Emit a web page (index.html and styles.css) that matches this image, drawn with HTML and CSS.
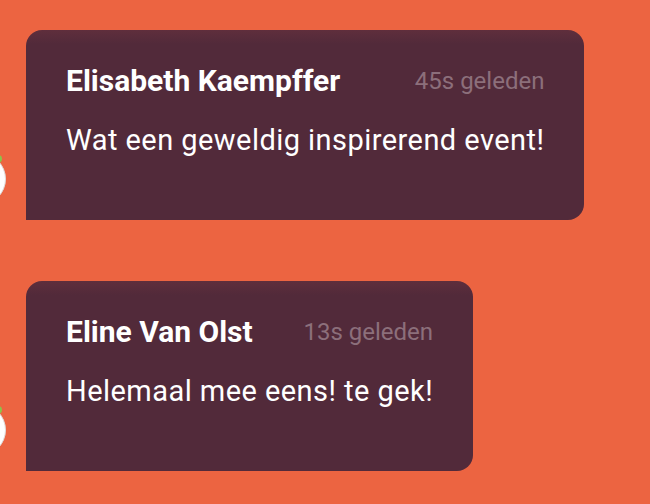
FILE: index.html
```html
<!DOCTYPE html>
<html>
<head>
  <meta charset="utf-8">
  <meta name="viewport" content="width=device-width, initial-scale=1">
  <title>Reacties</title>
  <link rel="stylesheet" href="styles.css">
</head>
<body>
  <div class="feed">
    <div class="comment">
      <div class="avatar"><span class="online"></span></div>
      <div class="bubble">
        <div class="meta">
          <span class="name">Elisabeth Kaempffer</span>
          <span class="time">45s geleden</span>
        </div>
        <p class="text">Wat een geweldig inspirerend event!</p>
      </div>
    </div>

    <div class="comment">
      <div class="avatar"><span class="online"></span></div>
      <div class="bubble">
        <div class="meta">
          <span class="name">Eline Van Olst</span>
          <span class="time">13s geleden</span>
        </div>
        <p class="text">Helemaal mee eens! te gek!</p>
      </div>
    </div>
  </div>
</body>
</html>
```

FILE: styles.css
```css
body {
  margin: 0;
  background: #EC6441;
  font-family: Roboto, "Liberation Sans", sans-serif;
  overflow: hidden;
}

.feed {
  display: flex;
  flex-direction: column;
  align-items: flex-start;
  gap: 61px;
  padding-top: 30px;
}

.comment {
  display: flex;
  align-items: flex-end;
}

.avatar {
  position: relative;
  width: 52px;
  height: 52px;
  margin-left: -46px;
  margin-right: 20px;
  margin-bottom: 15px;
  border-radius: 50%;
  background: #fff;
  border: 1px solid #ddd;
  box-sizing: border-box;
  flex-shrink: 0;
}

.online {
  position: absolute;
  top: 1px;
  right: 3px;
  width: 8px;
  height: 8px;
  border-radius: 50%;
  background: #8BC34A;
}

.bubble {
  background: linear-gradient(#5f2e3c, #522a3a 14px);
  border-radius: 16px 16px 16px 0;
  padding: 33px 40px 0 40px;
  height: 190px;
  box-sizing: border-box;
  color: #fff;
}

.meta {
  display: flex;
  justify-content: space-between;
  align-items: center;
  gap: 40px;
}

.name {
  font-size: 30px;
  font-weight: 700;
}

.time {
  font-size: 24px;
  color: #8c6f7b;
}

.text {
  margin: 25px 0 0;
  font-size: 29px;
  letter-spacing: 0.45px;
}
```
